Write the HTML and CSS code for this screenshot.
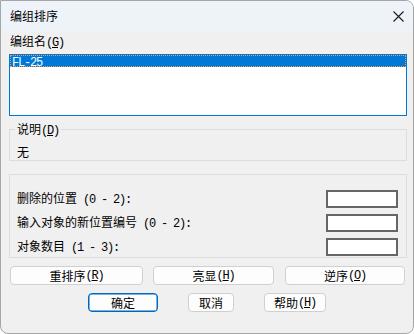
FILE: index.html
```html
<!DOCTYPE html>
<html lang="zh-CN">
<head>
<meta charset="utf-8">
<title>编组排序</title>
<link rel="stylesheet" href="styles.css">
</head>
<body>
<div class="window">
  <div class="titlebar">
    <span class="title">编组排序</span>
    <svg class="close" width="11" height="11" viewBox="0 0 11 11"><path d="M0.5 0.5 L10.5 10.5 M10.5 0.5 L0.5 10.5" stroke="#1a1a1a" stroke-width="1.1" fill="none"/></svg>
  </div>
  <div class="content">
    <div class="label">编组名<span class="m">(<u>G</u>)</span></div>
    <div class="listbox">
      <div class="item selected"><span class="m">FL-25</span></div>
    </div>
    <div class="group desc">
      <div class="legend">说明<span class="m">(<u>D</u>)</span></div>
      <div class="desc-text">无</div>
    </div>
    <div class="group params">
      <div class="row"><span>删除的位置<span class="m"> (0 - 2):</span></span><input class="field" type="text"></div>
      <div class="row"><span>输入对象的新位置编号<span class="m"> (0 - 2):</span></span><input class="field" type="text"></div>
      <div class="row"><span>对象数目<span class="m"> (1 - 3):</span></span><input class="field" type="text"></div>
    </div>
    <div class="btnrow1">
      <button class="btn w133">重排序<span class="m">(<u>R</u>)</span></button>
      <button class="btn w121">亮显<span class="m">(<u>H</u>)</span></button>
      <button class="btn w120">逆序<span class="m">(<u>O</u>)</span></button>
    </div>
    <div class="btnrow2">
      <button class="btn default w70">确定</button>
      <button class="btn w46">取消</button>
      <button class="btn w62">帮助<span class="m">(<u>H</u>)</span></button>
    </div>
  </div>
</div>
</body>
</html>
```
FILE: styles.css
```css
html, body {
  margin: 0;
  padding: 0;
  background: #ffffff;
}

.window {
  box-sizing: border-box;
  width: 414px;
  height: 334px;
  border: 1px solid #a6a6a6;
  border-radius: 0 8px 8px 8px;
  background: #f0f0f0;
  overflow: hidden;
  font-family: "Noto Sans CJK SC", sans-serif;
  font-size: 12px;
  line-height: 14px;
  color: #000;
}

.m {
  font-family: "Liberation Mono", monospace;
  letter-spacing: -1.2px;
  white-space: pre;
}

.m u {
  text-decoration-thickness: 1px;
  text-underline-offset: 1px;
}

.titlebar {
  height: 30px;
  background: #eef3fa;
  display: flex;
  align-items: center;
  justify-content: space-between;
  padding: 0 9px;
}

.title {
  line-height: 14px;
}

.close {
  display: block;
}

.content {
  padding: 3px 6px 0 8px;
}

.label {
  margin: 0 0 4px 1px;
}

.listbox {
  box-sizing: border-box;
  height: 62px;
  border: 1px solid #0078d7;
  background: #fff;
}

.item {
  height: 12px;
  line-height: 12px;
  padding-left: 2px;
}

.item.selected {
  background: #0078d7;
  color: #fff;
  outline: 1px dotted #f59a3e;
  outline-offset: -1px;
}

.group {
  border: 1px solid #dcdcdc;
  margin-top: 13px;
}

.desc {
  padding: 0 7px 1px 7px;
}

.legend {
  width: fit-content;
  margin: -8px 0 0 -2px;
  padding: 0 2px;
  background: #f0f0f0;
}

.desc-text {
  margin-top: 7px;
}

.params {
  padding: 15px 8px 1px 7px;
  display: flex;
  flex-direction: column;
  gap: 6px;
}

.row {
  height: 18px;
  display: flex;
  align-items: center;
  justify-content: space-between;
}

.row > span {
  margin-top: -1px;
}

.field {
  box-sizing: border-box;
  width: 72px;
  height: 18px;
  margin: 0;
  padding: 0;
  border: 2px solid #666666;
  background: #fff;
  outline: none;
}

.btnrow1 {
  display: flex;
  gap: 10px;
  margin-top: 8px;
  padding-left: 1px;
}

.btnrow2 {
  display: flex;
  gap: 30px;
  margin-top: 8px;
  padding-left: 79px;
}

.btn {
  box-sizing: border-box;
  height: 19px;
  margin: 0;
  padding: 0;
  border: 1px solid #d0d0d0;
  border-radius: 4px;
  background: #fdfdfd;
  font-family: "Noto Sans CJK SC", sans-serif;
  font-size: 12px;
  line-height: 14px;
  color: #000;
  display: flex;
  align-items: center;
  justify-content: center;
}

.btn.default {
  border: 1px solid #0067c0;
  box-shadow: inset 0 0 0 0.5px #0067c0;
}

.w133 { width: 133px; }
.w121 { width: 121px; }
.w120 { width: 120px; margin-left: 1px; }
.w70 { width: 70px; }
.w46 { width: 46px; }
.w62 { width: 62px; }
```
